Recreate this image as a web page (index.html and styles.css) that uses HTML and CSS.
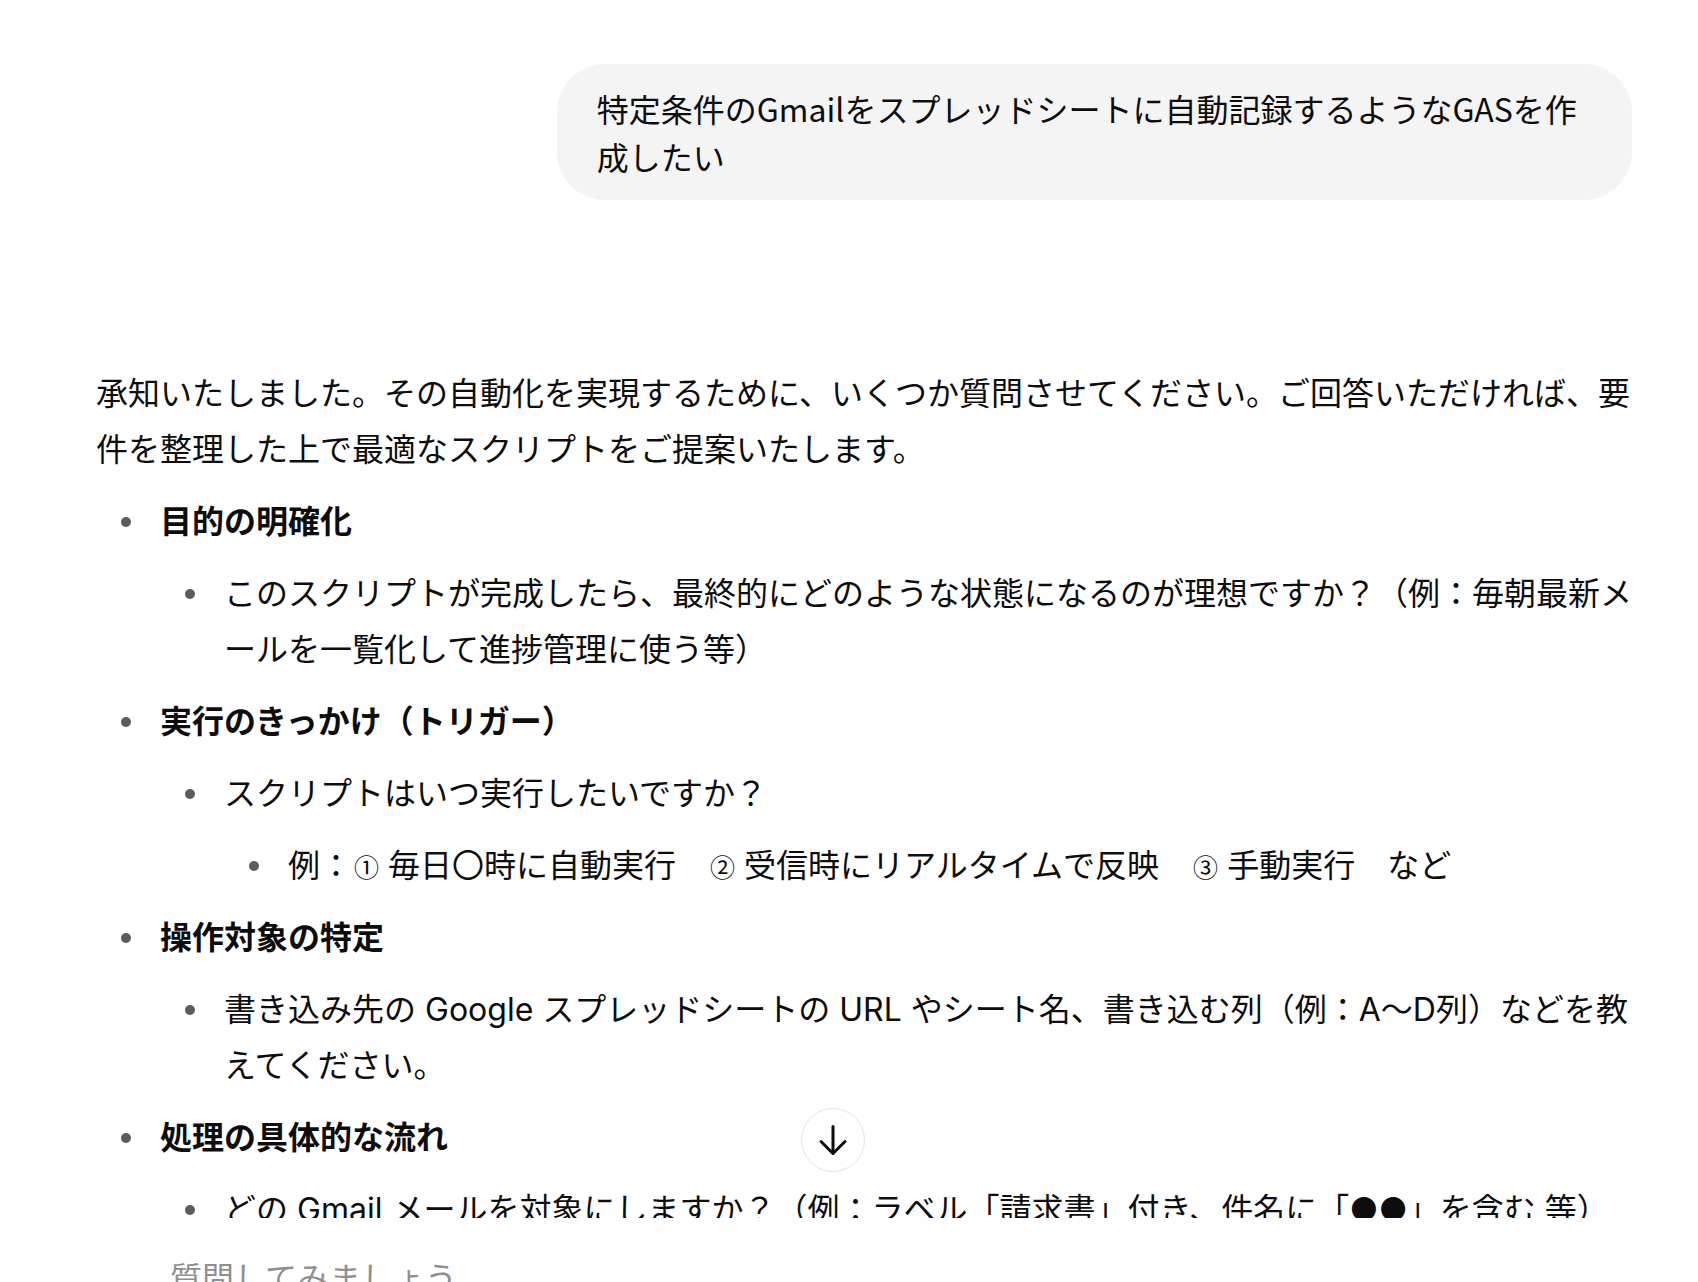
FILE: index.html
```html
<!DOCTYPE html>
<html lang="ja">
<head>
<meta charset="utf-8">
<title>Chat</title>
<link rel="stylesheet" href="styles.css">
</head>
<body>
<div class="app">
  <main class="thread">
    <div class="col">
      <div class="user-row">
        <div class="bubble">特定条件のGmailをスプレッドシートに自動記録するようなGASを作成したい</div>
      </div>
      <div class="assistant">
        <p>承知いたしました。その自動化を実現するために、いくつか質問させてください。ご回答いただければ、要件を整理した上で最適なスクリプトをご提案いたします。</p>
        <ul>
          <li><strong>目的の明確化</strong>
            <ul>
              <li>このスクリプトが完成したら、最終的にどのような状態になるのが理想ですか？（例：毎朝最新メールを一覧化して進捗管理に使う等）</li>
            </ul>
          </li>
          <li><strong>実行のきっかけ（トリガー）</strong>
            <ul>
              <li>スクリプトはいつ実行したいですか？
                <ul>
                  <li>例：<span class="num">①</span> 毎日〇時に自動実行　<span class="num">②</span> 受信時にリアルタイムで反映　<span class="num">③</span> 手動実行　など</li>
                </ul>
              </li>
            </ul>
          </li>
          <li><strong>操作対象の特定</strong>
            <ul>
              <li>書き込み先の Google スプレッドシートの URL やシート名、書き込む列（例：A〜D列）などを教えてください。</li>
            </ul>
          </li>
          <li><strong>処理の具体的な流れ</strong>
            <ul>
              <li>どの Gmail メールを対象にしますか？（例：ラベル「請求書」付き、件名に「●●」を含む 等）</li>
              <li>メールのどの情報（日付、差出人、件名、本文など）を記録しますか？</li>
            </ul>
          </li>
        </ul>
      </div>
    </div>
    <button class="scroll-btn" type="button" aria-label="下にスクロール">
      <svg width="40" height="40" viewBox="0 0 40 40" fill="none" stroke="#0d0d0d" stroke-width="3" stroke-linecap="round" stroke-linejoin="round">
        <path d="M20 6.5V33"/>
        <path d="M8 21.5L20 33.5L32 21.5"/>
      </svg>
    </button>
  </main>
  <div class="composer">
    <div class="placeholder">質問してみましょう</div>
  </div>
</div>
</body>
</html>
```
FILE: styles.css
```css
html, body {
  margin: 0;
  padding: 0;
  background: #ffffff;
}

body {
  color: #0d0d0d;
  font-family: "Inter", "Noto Sans CJK JP", sans-serif;
}

.app {
  height: 1282px;
  display: flex;
  flex-direction: column;
  overflow: hidden;
}

.thread {
  flex: 1;
  position: relative;
  overflow: hidden;
}

.col {
  width: 1536px;
  margin-left: 96px;
  padding-top: 64px;
}

.user-row {
  display: flex;
  justify-content: flex-end;
}

.bubble {
  max-width: 70%;
  box-sizing: border-box;
  background: #f4f4f4;
  border-radius: 48px;
  padding: 20px 40px;
  font-family: "Noto Sans CJK JP", sans-serif;
  font-size: 32px;
  line-height: 48px;
  color: #0d0d0d;
}

.assistant {
  margin-top: 166px;
  font-size: 32px;
  line-height: 56px;
}

.assistant p {
  margin: 0;
}

.assistant ul {
  list-style: none;
  margin: 16px 0 0;
  padding: 0 0 0 64px;
}

.assistant li {
  position: relative;
}

.assistant li + li {
  margin-top: 16px;
}

.assistant li::before {
  content: "";
  position: absolute;
  left: -39px;
  top: 23px;
  width: 10px;
  height: 10px;
  border-radius: 50%;
  background: #5d5d5d;
}

.assistant strong {
  font-weight: 700;
}

.num {
  font-family: "Noto Sans CJK JP", sans-serif;
  font-size: 25px;
  margin-left: 2px;
}

.scroll-btn {
  position: absolute;
  left: 801px;
  bottom: 46px;
  width: 64px;
  height: 64px;
  box-sizing: border-box;
  border: 1px solid #e3e3e3;
  border-radius: 50%;
  background: #ffffff;
  padding: 0;
  display: flex;
  align-items: center;
  justify-content: center;
  cursor: pointer;
}

.composer {
  height: 64px;
  flex: none;
  background: #ffffff;
  padding: 34px 0 0 170px;
  box-sizing: border-box;
}

.placeholder {
  font-family: "Noto Sans CJK JP", sans-serif;
  font-size: 32px;
  line-height: 48px;
  color: #8f8f8f;
  white-space: nowrap;
}
```
